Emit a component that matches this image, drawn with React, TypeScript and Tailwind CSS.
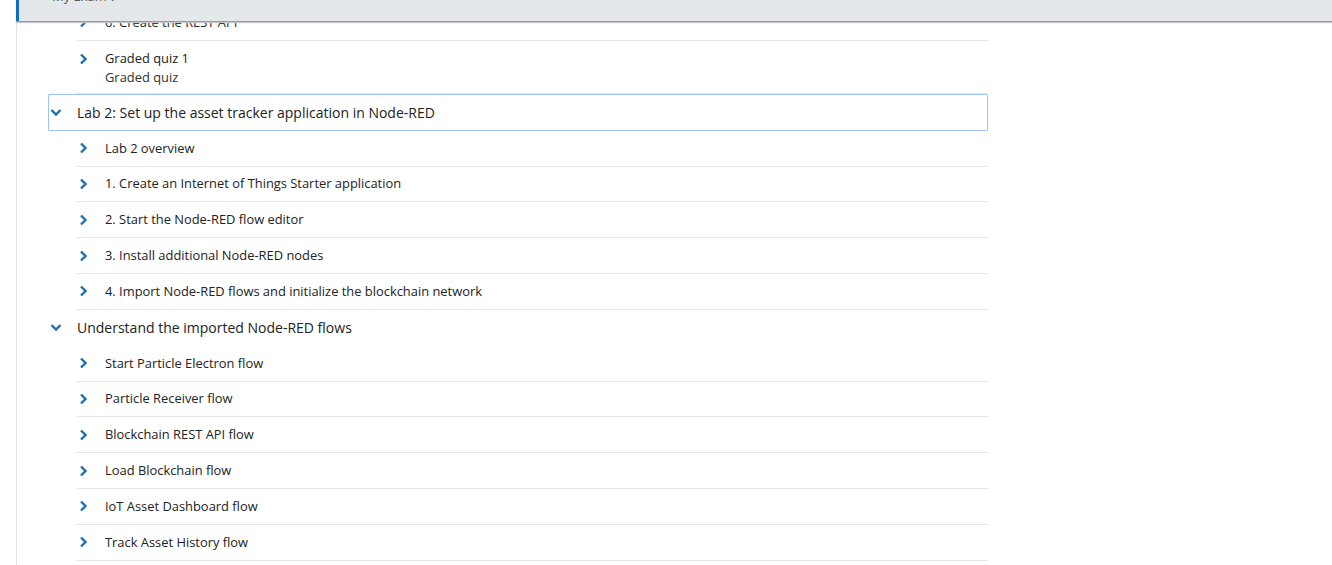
import React from "react";

const Right = () => (
  <svg width="9" height="12" viewBox="0 0 9 12" className="shrink-0">
    <path d="M2 1.5 L6.5 6 L2 10.5" fill="none" stroke="#1d6fb4" strokeWidth="2.4" />
  </svg>
);
const Down = () => (
  <svg width="12" height="9" viewBox="0 0 12 9" className="shrink-0">
    <path d="M1.5 2 L6 6.5 L10.5 2" fill="none" stroke="#1d6fb4" strokeWidth="2.4" />
  </svg>
);

function Item({ title, sub }: { title: string; sub?: string }) {
  if (sub) {
    return (
      <div className="flex items-start border-b border-[#e5e5e5] ml-[29px] h-[53px] pt-[8px]">
        <div className="w-[28px] pl-[2px] pt-[4px] flex">
          <Right />
        </div>
        <div className="text-[12.9px] leading-[19px] text-[#222]">
          <div>{title}</div>
          <div className="text-[#333]">{sub}</div>
        </div>
      </div>
    );
  }
  return (
    <div className="flex items-center border-b border-[#e5e5e5] ml-[29px] h-[35.8px]">
      <div className="w-[28px] pl-[2px] flex">
        <Right />
      </div>
      <div className="text-[12.9px] leading-[19px] text-[#222]">{title}</div>
    </div>
  );
}

function Section({ title, focused }: { title: string; focused?: boolean }) {
  return (
    <div
      className={`flex items-center ${
        focused ? "h-[37px] border border-[#9fc3f6] rounded-[1px]" : "h-[36px] border border-transparent"
      }`}
    >
      <div className="w-[28px] pl-[1px] flex">
        <Down />
      </div>
      <div className="text-[14px] text-[#222]">{title}</div>
    </div>
  );
}

export default function App() {
  return (
    <div
      className="relative w-[1332px] h-[565px] overflow-hidden bg-white"
      style={{ fontFamily: '"Open Sans", "Noto Sans", sans-serif' }}
    >
      <div className="absolute left-[16px] top-0 bottom-0 w-px bg-[#e3e3e3]" />
      <div className="ml-[48px] w-[940px] pt-[5px]">
        <Item title="6. Create the REST API" />
        <Item title="Graded quiz 1" sub="Graded quiz" />
        <Section title="Lab 2: Set up the asset tracker application in Node-RED" focused />
        <Item title="Lab 2 overview" />
        <Item title="1. Create an Internet of Things Starter application" />
        <Item title="2. Start the Node-RED flow editor" />
        <Item title="3. Install additional Node-RED nodes" />
        <Item title="4. Import Node-RED flows and initialize the blockchain network" />
        <Section title="Understand the imported Node-RED flows" />
        <Item title="Start Particle Electron flow" />
        <Item title="Particle Receiver flow" />
        <Item title="Blockchain REST API flow" />
        <Item title="Load Blockchain flow" />
        <Item title="IoT Asset Dashboard flow" />
        <Item title="Track Asset History flow" />
      </div>
      <div className="absolute left-[16px] right-0 top-0 h-[21px] bg-[#e4e8eb] border-l-[3px] border-[#0f6fbf] shadow-[0_1px_0_#9a9a9a,0_2px_1px_#c8c8c8] overflow-hidden">
        <div className="absolute left-[33px] top-[-13px] text-[13px] text-[#555]">My Exam ?</div>
      </div>
    </div>
  );
}
